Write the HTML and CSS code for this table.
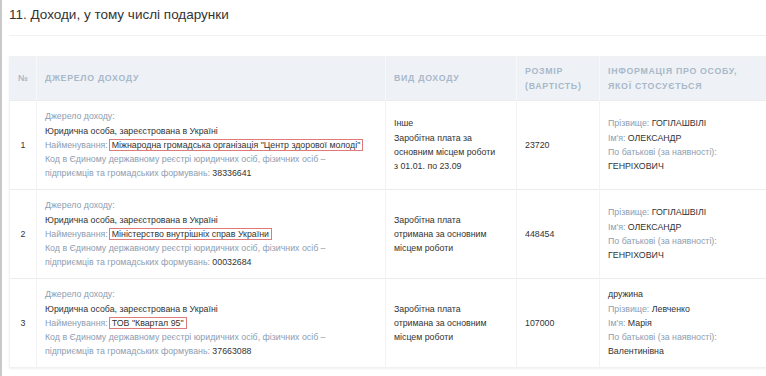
FILE: index.html
```html
<!DOCTYPE html>
<html lang="uk">
<head>
    <meta charset="UTF-8">
    <title>Доходи, у тому числі подарунки</title>
    <link rel="stylesheet" href="styles.css">
</head>
<body>
<div class="section">
    <h2 class="section-title">11. Доходи, у тому числі подарунки</h2>

    <table class="income-table">
        <colgroup>
            <col class="col-num">
            <col class="col-source">
            <col class="col-type">
            <col class="col-size">
            <col class="col-info">
        </colgroup>
        <thead>
            <tr>
                <th class="num">№</th>
                <th>Джерело доходу</th>
                <th>Вид доходу</th>
                <th>Розмір (вартість)</th>
                <th class="info">Інформація про особу, якої стосується</th>
            </tr>
        </thead>
        <tbody>
            <tr>
                <td class="num">1</td>
                <td>
                    <span class="label">Джерело доходу:</span><br>
                    Юридична особа, зареєстрована в Україні<br>
                    <span class="label">Найменування:</span><span class="mark">Міжнародна громадська організація "Центр здорової молоді"</span><br>
                    <span class="label">Код в Єдиному державному реєстрі юридичних осіб, фізичних осіб –<br>підприємців та громадських формувань:</span> 38336641
                </td>
                <td class="type">Інше<br>Заробітна плата за<br>основним місцем роботи<br>з 01.01. по 23.09</td>
                <td>23720</td>
                <td>
                    <span class="label">Прізвище:</span> ГОГІЛАШВІЛІ<br>
                    <span class="label">Ім'я:</span> ОЛЕКСАНДР<br>
                    <span class="label">По батькові (за наявності):</span><br>
                    ГЕНРІХОВИЧ
                </td>
            </tr>
            <tr>
                <td class="num">2</td>
                <td>
                    <span class="label">Джерело доходу:</span><br>
                    Юридична особа, зареєстрована в Україні<br>
                    <span class="label">Найменування:</span><span class="mark">Міністерство внутрішніх справ України</span><br>
                    <span class="label">Код в Єдиному державному реєстрі юридичних осіб, фізичних осіб –<br>підприємців та громадських формувань:</span> 00032684
                </td>
                <td class="type">Заробітна плата<br>отримана за основним<br>місцем роботи</td>
                <td>448454</td>
                <td>
                    <span class="label">Прізвище:</span> ГОГІЛАШВІЛІ<br>
                    <span class="label">Ім'я:</span> ОЛЕКСАНДР<br>
                    <span class="label">По батькові (за наявності):</span><br>
                    ГЕНРІХОВИЧ
                </td>
            </tr>
            <tr>
                <td class="num">3</td>
                <td>
                    <span class="label">Джерело доходу:</span><br>
                    Юридична особа, зареєстрована в Україні<br>
                    <span class="label">Найменування:</span><span class="mark">ТОВ "Квартал 95"</span><br>
                    <span class="label">Код в Єдиному державному реєстрі юридичних осіб, фізичних осіб –<br>підприємців та громадських формувань:</span> 37663088
                </td>
                <td class="type">Заробітна плата<br>отримана за основним<br>місцем роботи</td>
                <td>107000</td>
                <td>
                    дружина<br>
                    <span class="label">Прізвище:</span> Левченко<br>
                    <span class="label">Ім'я:</span> Марія<br>
                    <span class="label">По батькові (за наявності):</span><br>
                    Валентинівна
                </td>
            </tr>
        </tbody>
    </table>
</div>
</body>
</html>
```

FILE: styles.css
```css
:root {
    --cor-texto: #333;
    --cor-label: #8d9db2;
    --cor-header: #a9b8c8;
    --cor-header-bg: #eef2f7;
    --cor-linha: #ececec;
    --cor-marca: #e07a7a;
}

* {
    box-sizing: border-box;
    margin: 0;
    padding: 0;
}

html, body {
    overflow: hidden;
}

body {
    font-family: 'Liberation Sans', Arial, sans-serif;
    background-color: #fff;
    color: var(--cor-texto);
}

.section {
    border-left: 2px solid #c9c9c9;
    min-height: 376px;
    padding-left: 7px;
}

.section-title {
    font-size: 13.5px;
    font-weight: normal;
    color: #333;
    line-height: 18px;
    padding: 6px 0 11px 0;
    border-bottom: 1px solid #f0f0f0;
    margin-bottom: 20px;
}

.income-table {
    width: 765px;
    border-collapse: collapse;
    table-layout: fixed;
    font-size: 8.8px;
    line-height: 14.3px;
    box-shadow: 0 1px 2px rgba(0, 0, 0, 0.06);
    border: 1px solid #f1f1f1;
}

.col-num { width: 27px; }
.col-source { width: 349px; }
.col-type { width: 131px; }
.col-size { width: 83px; }
.col-info { width: 175px; }

.income-table th {
    background-color: var(--cor-header-bg);
    color: var(--cor-header);
    font-size: 8.8px;
    font-weight: bold;
    text-transform: uppercase;
    letter-spacing: 0.7px;
    text-align: left;
    height: 44px;
    padding: 0 8px;
    line-height: 15px;
    border-right: 1px solid #f6f8fa;
}

.income-table th.info {
    padding-right: 20px;
}

.income-table td {
    vertical-align: middle;
    padding: 8px 8px;
    border-top: 1px solid var(--cor-linha);
    border-right: 1px solid #f3f3f3;
    height: 89px;
}

.income-table .num {
    text-align: center;
    padding: 0;
}

.label {
    color: var(--cor-label);
}

.mark {
    border: 1px solid var(--cor-marca);
    padding: 0 2px;
    margin-left: 1px;
}
```
